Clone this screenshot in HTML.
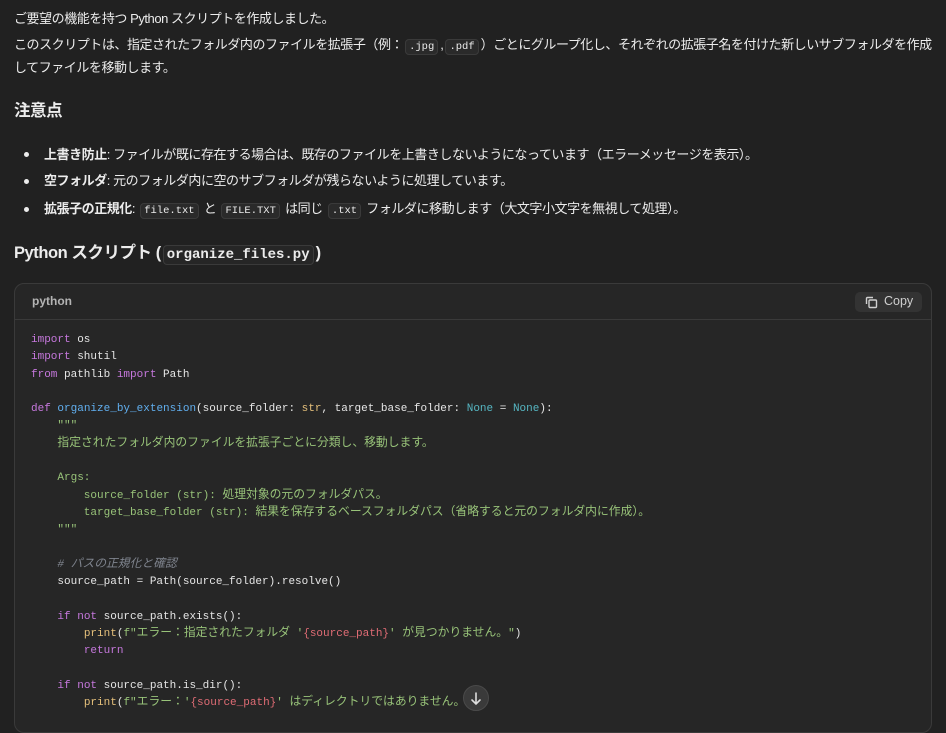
<!DOCTYPE html>
<html><head><meta charset="utf-8"><style>
*{margin:0;padding:0;box-sizing:border-box}
body{width:946px;height:712px;overflow:hidden;background:#212121;color:#ececec;font-family:"Liberation Sans","Noto Sans CJK JP",sans-serif;font-size:13px;letter-spacing:-0.45px;position:relative}
.l{position:absolute;left:14px;white-space:nowrap;line-height:20px}
code{font-family:"Liberation Mono","Noto Sans CJK JP",monospace;font-size:10.5px;letter-spacing:0;background:#2a2a2a;border:1px solid #3a3a3a;border-radius:4px;padding:1px 3px;margin:0 2px}
h{font-weight:bold;font-size:16.5px}
.b{position:absolute;left:24px;width:5px;height:5px;border-radius:50%;background:#ececec}
.blk{position:absolute;left:14px;top:283px;width:918px;height:450px;background:#262626;border:1px solid #3a3a3a;border-radius:10px;letter-spacing:0}
.hd{height:36px;border-bottom:1px solid #3a3a3a;position:relative}
.hd span{position:absolute;left:17px;top:10px;font-size:12px;color:#b4b4b4;font-weight:bold}
.cp{position:absolute;right:9px;top:8px;width:67px;height:20px;background:#333;border-radius:5px;font-size:12.5px;color:#cfcfcf;padding:2px 0 0 29px}
pre{position:absolute;left:16px;top:48px;font-family:"Liberation Mono","Noto Sans CJK JP",monospace;font-size:11px;line-height:17.3px;color:#e6e6e6}
.j{font-size:11.8px;line-height:1}
.k{color:#c678dd}.f{color:#61afef}.t{color:#e5c07b}.n{color:#56b6c2}.s{color:#98c379}.c{color:#7f848e;font-style:italic}.r{color:#e06c75}
</style></head><body>
<div class="l" style="top:9px">ご要望の機能を持つ Python スクリプトを作成しました。</div>
<div class="l" style="top:35px">このスクリプトは、指定されたフォルダ内のファイルを拡張子（例：<code>.jpg</code>,<code>.pdf</code>）ごとにグループ化し、それぞれの拡張子名を付けた新しいサブフォルダを作成</div>
<div class="l" style="top:58px">してファイルを移動します。</div>
<div class="l" style="top:101px"><h>注意点</h></div>
<div class="b" style="top:152px"></div><div class="l" style="left:44px;top:145px"><b>上書き防止</b>: ファイルが既に存在する場合は、既存のファイルを上書きしないようになっています（エラーメッセージを表示）。</div>
<div class="b" style="top:179px"></div><div class="l" style="left:44px;top:171px"><b>空フォルダ</b>: 元のフォルダ内に空のサブフォルダが残らないように処理しています。</div>
<div class="b" style="top:207px"></div><div class="l" style="left:44px;top:199px"><b>拡張子の正規化</b>: <code>file.txt</code> と <code>FILE.TXT</code> は同じ <code>.txt</code> フォルダに移動します（大文字小文字を無視して処理）。</div>
<div class="l" style="top:243px"><h>Python スクリプト (<code style="font-size:14px;font-weight:bold;background:#262626">organize_files.py</code>)</h></div>
<div class="blk"><div class="hd"><span>python</span><div class="cp"><svg style="position:absolute;left:10px;top:4px" width="13" height="13" viewBox="0 0 13 13" fill="none" stroke="#cfcfcf" stroke-width="1.4"><path d="M1.5 8V2.5a1 1 0 0 1 1-1H8"/><rect x="4" y="4" width="7.5" height="7.5" rx="1"/></svg>Copy</div></div>
<pre><span class="k">import</span> os
<span class="k">import</span> shutil
<span class="k">from</span> pathlib <span class="k">import</span> Path

<span class="k">def</span> <span class="f">organize_by_extension</span>(source_folder: <span class="t">str</span>, target_base_folder: <span class="n">None</span> = <span class="n">None</span>):
    <span class="s">"""
    <span class="j">指定されたフォルダ内のファイルを拡張子ごとに分類し、移動します。</span>

    Args:
        source_folder (str): <span class="j">処理対象の元のフォルダパス。</span>
        target_base_folder (str): <span class="j">結果を保存するベースフォルダパス（省略すると元のフォルダ内に作成）。</span>
    """</span>

    <span class="c"># <span class="j">パスの正規化と確認</span></span>
    source_path = Path(source_folder).resolve()

    <span class="k">if</span> <span class="k">not</span> source_path.exists():
        <span class="t">print</span>(<span class="s">f"<span class="j">エラー：指定されたフォルダ</span> '</span><span class="r">{source_path}</span><span class="s">' <span class="j">が見つかりません。</span>"</span>)
        <span class="k">return</span>

    <span class="k">if</span> <span class="k">not</span> source_path.is_dir():
        <span class="t">print</span>(<span class="s">f"<span class="j">エラー：</span>'</span><span class="r">{source_path}</span><span class="s">' <span class="j">はディレクトリではありません。</span>"</span>)</pre>
</div>
<div style="position:absolute;left:463px;top:685px;width:26px;height:26px;border-radius:50%;background:#3a3a3a;border:1px solid #4a4a4a"><svg width="26" height="26" viewBox="0 0 26 26" fill="none" stroke="#ddd" stroke-width="1.6" stroke-linecap="round"><path d="M12 7v11M8 14l4 4 4-4"/></svg></div>
</body></html>
